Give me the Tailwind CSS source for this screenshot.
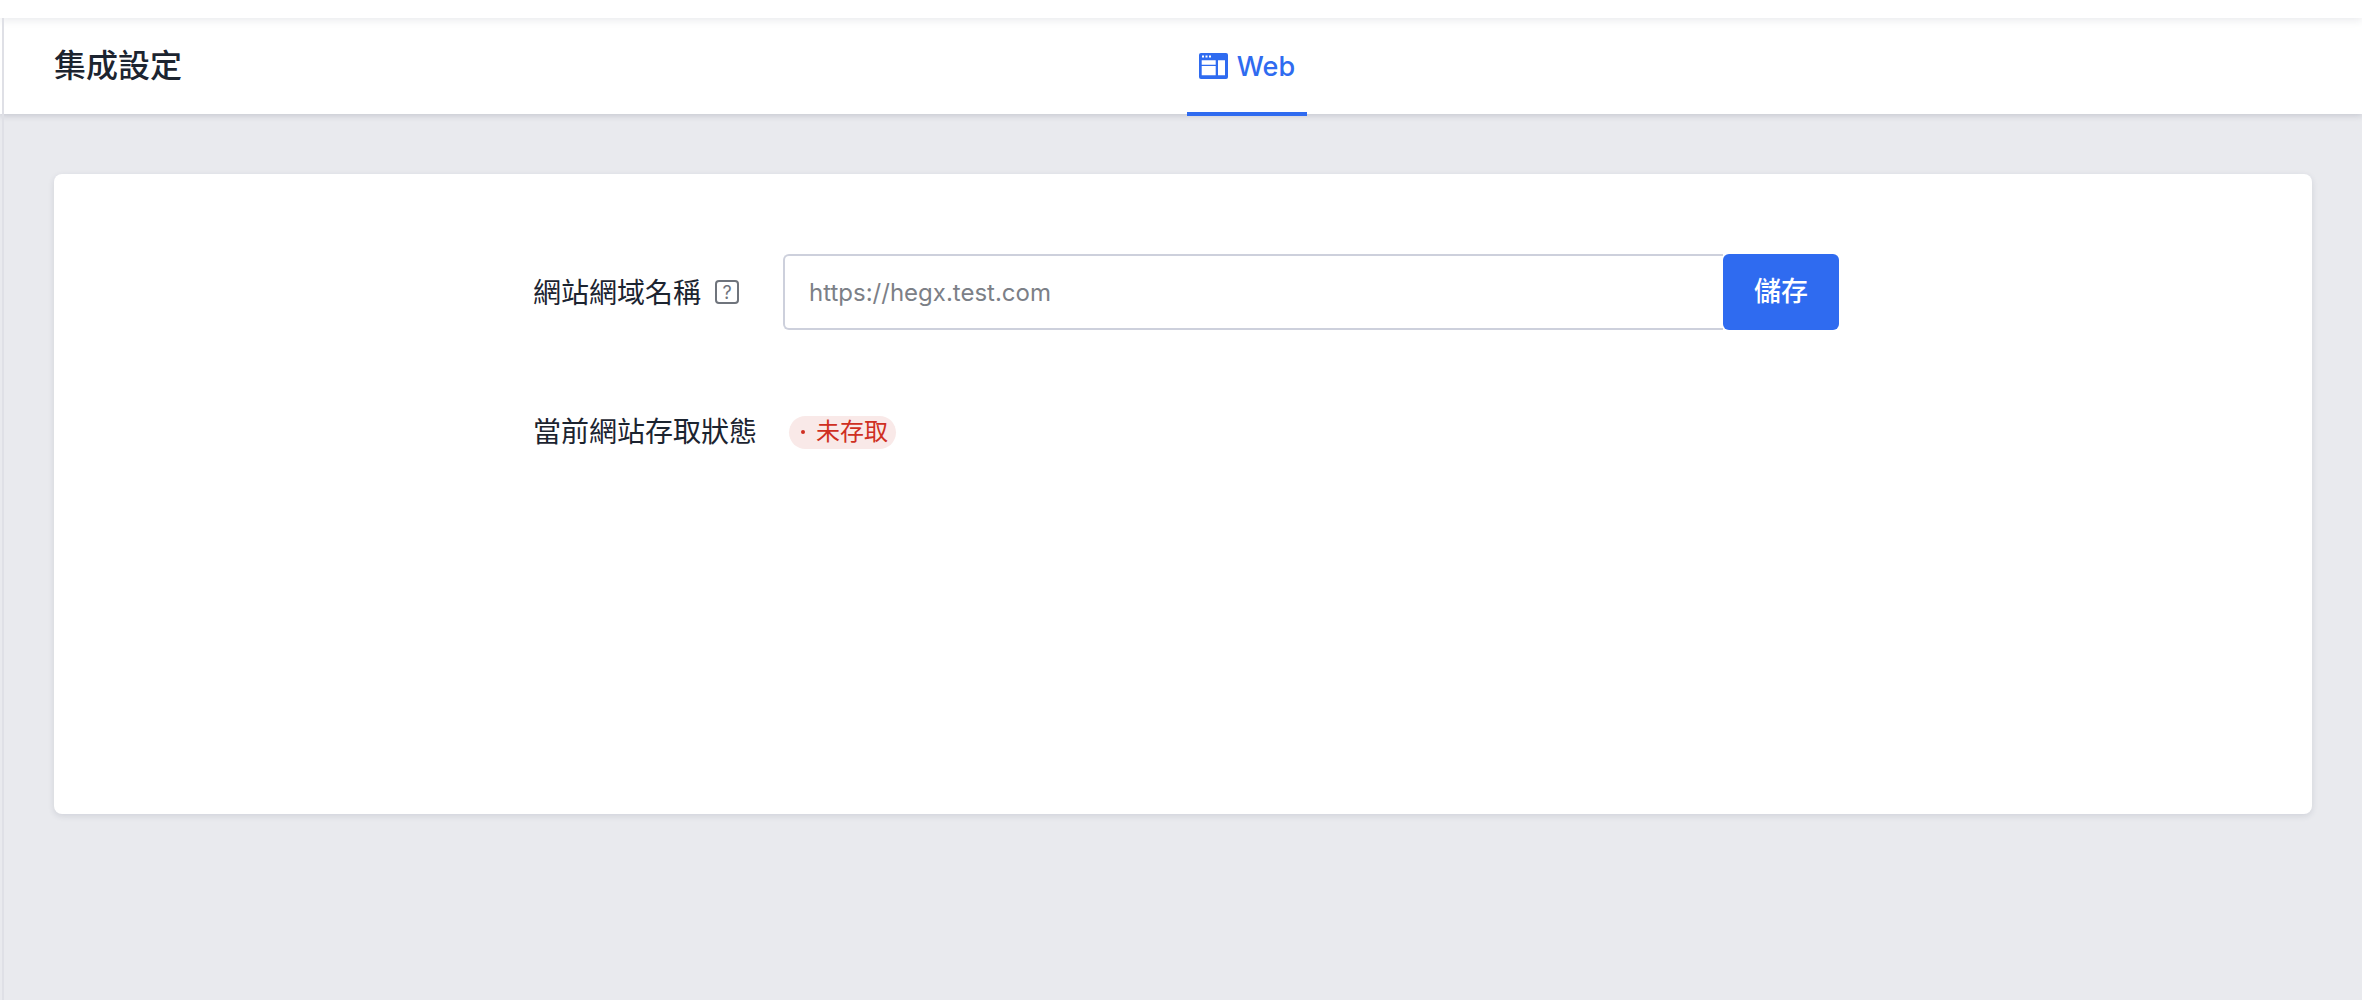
<!DOCTYPE html>
<html lang="zh-Hant">
<head>
	<meta charset="UTF-8">
	<title>集成設定</title>
	<script src="https://cdn.jsdelivr.net/npm/@tailwindcss/browser@4"></script>
</head>
<body class="flex h-screen flex-col overflow-hidden bg-white font-['Inter','Noto_Sans_CJK_TC',sans-serif]">
	<div class="relative z-10 h-[18px] shrink-0 bg-white shadow-[0_2px_8px_rgba(30,40,70,0.1)]"></div>
	<div class="relative flex-1 bg-[#e9eaee]">
		<div class="absolute inset-y-0 left-[2px] z-10 w-[2px] bg-[#dfe0e6]"></div>
		<div class="relative flex h-[96px] items-center bg-white pl-[54px] shadow-[0_2px_6px_rgba(30,40,70,0.16)]">
			<h1 class="text-[32px] font-medium text-[#1c2430]">集成設定</h1>
			<div class="absolute -bottom-[2px] left-[1187px] flex h-[100px] w-[120px] items-center justify-center gap-[9px] border-b-4 border-[#2f6bf0] pt-[4px] text-[#2f6bf0]">
				<svg class="h-[26px] w-[29px]" viewBox="0 0 29 26">
					<rect width="29" height="26" rx="2" fill="currentColor"/>
					<path fill="#fff" d="M3 2.5h2v2H3zM6.5 2.5h2v2h-2zM10 2.5h2v2h-2zM2.7 7.3h14v4.4h-14zM2.7 13h14v9.3h-14zM19 7.3h7v15h-7z"/>
				</svg>
				<span class="pt-[2px] text-[27px] font-medium">Web</span>
			</div>
		</div>
		<div class="pl-[54px] pr-[50px] pt-[60px]">
			<div class="h-[640px] rounded-lg bg-white pl-[479px] pt-[80px] shadow-[0_2px_6px_rgba(30,40,70,0.12)]">
				<div class="flex h-[76px] items-center">
					<div class="flex w-[250px] items-center">
						<span class="pt-[2px] text-[28px] text-[#1c2430]">網站網域名稱</span>
						<span class="ml-[14px] flex h-[24px] w-[24px] items-center justify-center rounded-[4px] border-2 border-[#6f747c] text-[18px] text-[#6f747c]">?</span>
					</div>
					<div class="flex h-full w-[1056px]">
						<input class="h-full flex-1 rounded-l-md border-2 border-r-0 border-[#cdd0dc] pl-[24px] pt-[1px] text-[24px] text-[#1c2430] placeholder:text-[#7c8087]" placeholder="https://hegx.test.com">
						<button class="h-full w-[116px] rounded-md bg-[#2f6bf0] text-[27px] font-medium text-white">儲存</button>
					</div>
				</div>
				<div class="mt-[82px] flex h-[40px] items-center">
					<span class="w-[256px] text-[28px] text-[#1c2430]">當前網站存取狀態</span>
					<span class="flex h-[33px] items-center rounded-full bg-[#f9e9e8] pl-[12px] pr-[8px] text-[24px] text-[#cf2f22]">
						<span class="mr-[11px] h-[4px] w-[4px] rounded-full bg-[#cf2f22]"></span>未存取
					</span>
				</div>
			</div>
		</div>
	</div>
</body>
</html>
